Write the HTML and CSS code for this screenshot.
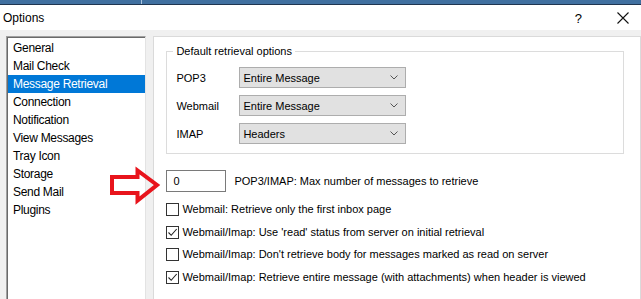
FILE: index.html
```html
<!DOCTYPE html>
<html>
<head>
<meta charset="utf-8">
<link rel="stylesheet" href="styles.css">
</head>
<body>
<div class="topbar"><div class="topbar-seg1"></div><div class="topbar-seg2"></div></div>
<div class="titlebar">
  <span class="title">Options</span>
  <span class="help">?</span>
  <svg class="close" width="12" height="12" viewBox="0 0 12 12"><path d="M0.5 0.5 L11.5 11.5 M11.5 0.5 L0.5 11.5" stroke="#111" stroke-width="1.1" fill="none"/></svg>
</div>
<div class="body">
  <div class="list">
    <div class="item">General</div>
    <div class="item">Mail Check</div>
    <div class="item selected">Message Retrieval</div>
    <div class="item">Connection</div>
    <div class="item">Notification</div>
    <div class="item">View Messages</div>
    <div class="item">Tray Icon</div>
    <div class="item">Storage</div>
    <div class="item">Send Mail</div>
    <div class="item">Plugins</div>
  </div>
  <div class="panel">
    <div class="group">
      <div class="legend">Default retrieval options</div>
      <div class="row"><span class="lbl">POP3</span><div class="combo"><span>Entire Message</span><svg width="8" height="5" viewBox="0 0 8 5"><path d="M0.5 0.5 L4 4 L7.5 0.5" stroke="#555" fill="none"/></svg></div></div>
      <div class="row"><span class="lbl">Webmail</span><div class="combo"><span>Entire Message</span><svg width="8" height="5" viewBox="0 0 8 5"><path d="M0.5 0.5 L4 4 L7.5 0.5" stroke="#555" fill="none"/></svg></div></div>
      <div class="row"><span class="lbl">IMAP</span><div class="combo"><span>Headers</span><svg width="8" height="5" viewBox="0 0 8 5"><path d="M0.5 0.5 L4 4 L7.5 0.5" stroke="#555" fill="none"/></svg></div></div>
    </div>
    <div class="maxrow"><div class="input">0</div><span>POP3/IMAP: Max number of messages to retrieve</span></div>
    <div class="check c1"><span class="box"></span><span>Webmail: Retrieve only the first inbox page</span></div>
    <div class="check c2"><span class="box"><svg width="11" height="11" viewBox="0 0 11 11"><path d="M1.5 5.5 L4.2 8.3 L9.7 2" stroke="#222" stroke-width="1.1" fill="none"/></svg></span><span>Webmail/Imap: Use 'read' status from server on initial retrieval</span></div>
    <div class="check c3"><span class="box"></span><span>Webmail/Imap: Don't retrieve body for messages marked as read on server</span></div>
    <div class="check c4"><span class="box"><svg width="11" height="11" viewBox="0 0 11 11"><path d="M1.5 5.5 L4.2 8.3 L9.7 2" stroke="#222" stroke-width="1.1" fill="none"/></svg></span><span>Webmail/Imap: Retrieve entire message (with attachments) when header is viewed</span></div>
  </div>
</div>
<svg class="arrow" width="60" height="50" viewBox="105 162 60 50"><polygon points="112,177 137.5,177 137.5,170.5 157,185 137.5,200.5 137.5,193 112,193" fill="none" stroke="#e8141c" stroke-width="4" stroke-linejoin="miter"/></svg>
</body>
</html>
```
FILE: styles.css
```css
html, body { margin: 0; padding: 0; }
body {
  width: 641px;
  height: 299px;
  overflow: hidden;
  background: #f0f0f0;
  font-family: "Liberation Sans", Arial, sans-serif;
  color: #000;
  position: relative;
}
.topbar {
  height: 4px;
  display: flex;
  background: #4070a0;
  border-bottom: 1px solid #1f3550;
}
.topbar-seg1 { width: 141px; border-right: 1px solid #a9c4e0; }
.topbar-seg2 { flex: 1; }
.titlebar {
  height: 25px;
  background: #fff;
  display: flex;
  align-items: center;
  font-size: 12px;
}
.title { padding-left: 3px; flex: 1; padding-top: 1px; }
.help { margin-right: 35px; font-size: 13px; padding-top: 1px; }
.close { margin-right: 12px; }
.body {
  display: flex;
  padding: 6px 0 0 6px;
  gap: 7px;
  height: 269px;
  box-sizing: border-box;
  overflow: hidden;
}
.list {
  width: 139px;
  background: #fff;
  border-left: 1px solid #a0a0a0;
  border-top: 1px solid #a0a0a0;
  border-right: 1px solid #e3e3e3;
  box-shadow: inset 1px 1px 0 #696969;
  padding: 2px 0 0 1px;
  font-size: 12px;
  letter-spacing: -0.3px;
}
.item {
  height: 18px;
  line-height: 18px;
  padding-left: 5px;
}
.item.selected { background: #0078d7; color: #fff; }
.panel {
  width: 479px;
  background: #fff;
  border: 1px solid #dadada;
  border-bottom: none;
  padding: 14px 0 0 12px;
  font-size: 11px;
}
.group {
  width: 456px;
  border: 1px solid #dcdcdc;
  position: relative;
  padding-top: 15px;
  height: 86px;
}
.legend {
  position: absolute;
  left: 6px;
  top: -7px;
  background: #fff;
  padding: 0 3px;
  line-height: 13px;
}
.row {
  display: flex;
  align-items: center;
  height: 21px;
  margin-bottom: 7px;
}
.lbl { width: 63px; padding-left: 9px; }
.combo {
  background: #e1e1e1;
  border: 1px solid #adadad;
  display: flex;
  align-items: center;
  justify-content: space-between;
  padding: 0 7px 0 3px;
  box-sizing: border-box;
  width: 167px;
  height: 21px;
}
.maxrow {
  display: flex;
  align-items: center;
  margin-top: 16px;
  height: 22px;
}
.input {
  height: 20px;
  border: 1px solid #7a7a7a;
  line-height: 20px;
  padding-left: 6px;
  width: 52px;
  margin-right: 8px;
}
.check {
  display: flex;
  align-items: center;
  height: 14px;
}
.c1 { margin-top: 10px; }
.c2 { margin-top: 9px; }
.c3 { margin-top: 8px; }
.c4 { margin-top: 9px; }
.box {
  width: 11px;
  height: 11px;
  border: 1px solid #333;
  background: #fff;
  margin-right: 3px;
  display: flex;
}
.arrow {
  position: absolute;
  left: 105px;
  top: 162px;
}
```
